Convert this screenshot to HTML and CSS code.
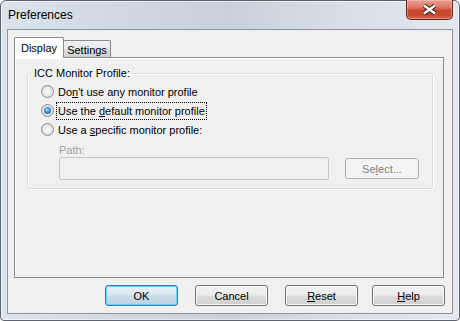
FILE: index.html
```html
<!DOCTYPE html>
<html lang="en">
<head>
  <meta charset="UTF-8" />
  <title>Preferences</title>
  <link rel="stylesheet" href="styles.css">
</head>
<body>
  <div class="window">
    <div class="titlebar">
      <span class="title">Preferences</span>
      <div class="close-btn">
        <svg width="15" height="11" viewBox="0 0 15 11">
          <path d="M2 1.5 L13 9.5 M13 1.5 L2 9.5" stroke="#3a2420" stroke-width="4.6" fill="none"/>
          <path d="M2 1.5 L13 9.5 M13 1.5 L2 9.5" stroke="#ffffff" stroke-width="2.4" fill="none"/>
        </svg>
      </div>
    </div>

    <div class="client">
      <div class="tabs">
        <div class="tab active">Display</div>
        <div class="tab">Settings</div>
      </div>

      <div class="tab-panel">
        <fieldset class="group">
          <legend>ICC Monitor Profile:</legend>

          <div class="radio-row">
            <span class="radio"></span>
            <span class="radio-text">Do<u>n</u>'t use any monitor profile</span>
          </div>
          <div class="radio-row">
            <span class="radio checked"></span>
            <span class="radio-text focus">Use the <u>d</u>efault monitor profile</span>
          </div>
          <div class="radio-row">
            <span class="radio"></span>
            <span class="radio-text">Use a <u>s</u>pecific monitor profile:</span>
          </div>

          <div class="path">
            <div class="path-label">Path:</div>
            <div class="path-row">
              <div class="path-input"></div>
              <div class="btn disabled">Se<u>l</u>ect...</div>
            </div>
          </div>
        </fieldset>
      </div>

      <div class="buttons">
        <div class="btn default">OK</div>
        <div class="btn">Cancel</div>
        <div class="btn"><span><u>R</u>eset</span></div>
        <div class="btn help"><span><u>H</u>elp</span></div>
      </div>
    </div>
  </div>
</body>
</html>
```

FILE: styles.css
```css
* {
  margin: 0;
  padding: 0;
  box-sizing: border-box;
}

body {
  background: #ffffff;
  font-family: 'Liberation Sans', Arial, sans-serif;
  font-size: 11px;
  color: #000;
}

.window {
  width: 460px;
  height: 321px;
  display: flex;
  flex-direction: column;
  border: 1px solid #5b646e;
  border-radius: 6px 6px 4px 4px;
  background: linear-gradient(to right, #dbe3ec 0%, #d0d8e1 25%, #c8d0d9 50%, #d8dfe7 75%, #e3e8ee 100%);
  box-shadow: inset 0 0 0 1px rgba(255, 255, 255, 0.55);
}

.titlebar {
  height: 28px;
  display: flex;
  align-items: center;
  padding: 0 6px 0 7px;
}

.title {
  font-size: 12px;
  flex: 1;
}

.close-btn {
  align-self: flex-start;
  margin-top: -1px;
  width: 47px;
  height: 20px;
  display: flex;
  align-items: center;
  justify-content: center;
  border: 1px solid #5a2923;
  border-top: none;
  border-radius: 0 0 5px 5px;
  background: linear-gradient(#e9a194 0%, #dc7664 40%, #c74630 55%, #c9482f 80%, #d46a4f 100%);
  box-shadow: inset 0 0 0 1px rgba(255, 200, 190, 0.45);
}

.client {
  flex: 1;
  margin: 0 6px 6px 6px;
  border: 1px solid #8b939c;
  background: #f0f0f0;
  display: flex;
  flex-direction: column;
  padding: 7px 8px 7px 6px;
}

.tabs {
  height: 20px;
  display: flex;
  align-items: flex-end;
}

.tab {
  height: 17px;
  width: 48px;
  margin-left: -1px;
  border: 1px solid #898c95;
  border-bottom: none;
  border-radius: 2px 2px 0 0;
  background: linear-gradient(#f2f2f2 0%, #ebebeb 50%, #dddddd 51%, #cfcfcf 100%);
  display: flex;
  align-items: center;
  justify-content: center;
  padding-top: 1px;
}

.tab.active {
  height: 21px;
  width: 50px;
  margin-left: 0;
  margin-bottom: -1px;
  background: #ffffff;
  position: relative;
  z-index: 1;
  padding-top: 0;
  padding-bottom: 1px;
}

.tab-panel {
  flex: 1;
  border: 1px solid #898c95;
  background: #f0f0f0;
  box-shadow: inset 1px 1px #ffffff;
  padding: 9px 10px 0 12px;
}

.group {
  border: 1px solid #d5dfe5;
  border-radius: 3px;
  box-shadow: inset 1px 1px #ffffff, 1px 1px #ffffff;
  padding: 2px 13px 8px 13px;
}

.group legend {
  line-height: 13px;
  padding: 0 2px;
  margin-left: -9px;
}

.radio-row {
  height: 19px;
  display: flex;
  align-items: center;
}

.radio {
  width: 13px;
  height: 13px;
  border-radius: 50%;
  border: 1px solid #8e8f8f;
  background: radial-gradient(circle at 50% 50%, #fbfbfb 0%, #e6e6e6 55%, #cfcfcf 100%);
  margin-right: 3px;
  display: flex;
  align-items: center;
  justify-content: center;
}

.radio.checked::after {
  content: "";
  width: 7px;
  height: 7px;
  border-radius: 50%;
  background: radial-gradient(circle at 45% 40%, #a4e0ff 0%, #3592d6 45%, #124c7c 100%);
}

.radio-text {
  line-height: 14px;
  padding: 1px 1px;
}

.focus {
  outline: 1px dotted #000;
}

.path {
  margin: 5px 0 0 18px;
}

.path-label {
  line-height: 13px;
  color: #a3a3a3;
}

.path-row {
  height: 23px;
  display: flex;
  align-items: center;
  gap: 16px;
}

.path-input {
  width: 270px;
  height: 23px;
  border: 1px solid #c6c6c6;
  border-radius: 2px;
  background: #f0f0f0;
}

.buttons {
  margin: 7px -1px 0 0;
  display: flex;
  justify-content: flex-end;
  gap: 17px;
}

.btn {
  width: 73px;
  height: 21px;
  border: 1px solid #707070;
  border-radius: 3px;
  background: linear-gradient(#f2f2f2 0%, #ebebeb 48%, #dddddd 52%, #cfcfcf 100%);
  box-shadow: inset 0 0 0 1px #fbfbfb;
  display: flex;
  align-items: center;
  justify-content: center;
}

.btn.default {
  border-color: #3c7fb1;
  background: linear-gradient(#e8f0f5 0%, #dae7f0 48%, #c9dce9 52%, #bcd2e2 100%);
  box-shadow: inset 0 0 0 1px #5fd0fb;
}

.btn.help {
  margin-left: -3px;
}

.btn.disabled {
  width: 74px;
  border-color: #adb2b5;
  background: #f4f4f4;
  box-shadow: none;
  color: #838383;
}
```
